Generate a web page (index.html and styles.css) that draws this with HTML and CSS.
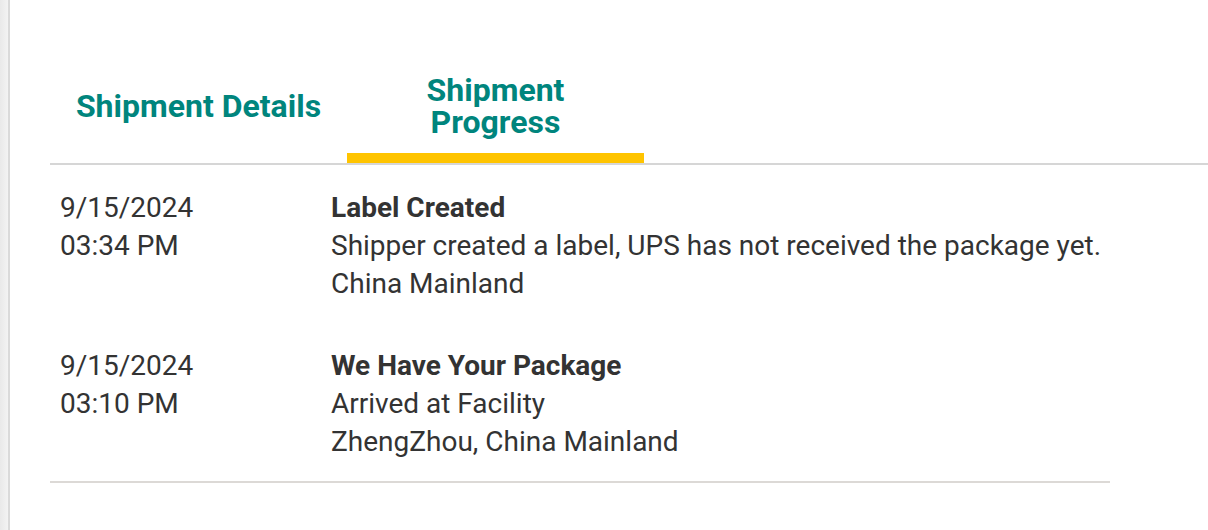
FILE: index.html
```html
<!DOCTYPE html>
<html lang="en">
<head>
<meta charset="utf-8">
<title>Shipment Progress</title>
<link rel="stylesheet" href="styles.css">
</head>
<body>
<div class="page">
  <aside class="edge"></aside>
  <main class="panel">
    <nav class="tabs">
      <div class="tab">Shipment Details</div>
      <div class="tab active">Shipment Progress</div>
    </nav>
    <section class="events">
      <div class="event">
        <div class="when">
          <div>9/15/2024</div>
          <div>03:34 PM</div>
        </div>
        <div class="what">
          <div class="status">Label Created</div>
          <div>Shipper created a label, UPS has not received the package yet.</div>
          <div>China Mainland</div>
        </div>
      </div>
      <div class="event">
        <div class="when">
          <div>9/15/2024</div>
          <div>03:10 PM</div>
        </div>
        <div class="what">
          <div class="status">We Have Your Package</div>
          <div>Arrived at Facility</div>
          <div>ZhengZhou, China Mainland</div>
        </div>
      </div>
    </section>
  </main>
</div>
</body>
</html>
```

FILE: styles.css
```css
* { box-sizing: border-box; }
html, body { margin: 0; padding: 0; background: #fff; }
body {
  font-family: Roboto, "Liberation Sans", Arial, sans-serif;
  color: #333;
}
.page {
  display: flex;
  min-height: 530px;
}
.edge {
  flex: 0 0 10px;
  background: linear-gradient(to right, #e9e9e9, #f3f3f3);
  border-right: 2px solid #dadada;
}
.panel {
  flex: 1;
  padding-left: 40px;
  padding-top: 68px;
}
.tabs {
  display: flex;
  border-bottom: 2px solid #d6d6d6;
}
.tab {
  width: 297px;
  height: 95px;
  display: flex;
  align-items: center;
  justify-content: center;
  text-align: center;
  padding: 0 10px 10px;
  font-size: 32px;
  line-height: 32px;
  font-weight: 700;
  color: #00857d;
  border-bottom: 10px solid transparent;
}
.tab.active {
  border-bottom-color: #ffc400;
  padding: 0 20px 10px;
}
.events {
  width: 1060px;
  border-bottom: 2px solid #dcd9d6;
}
.event {
  display: flex;
  padding: 24px 0 20px;
  font-size: 28px;
  line-height: 38px;
}
.when {
  flex: 0 0 281px;
  padding-left: 10px;
}
.what { flex: 1; }
.status { font-weight: 700; }
```
